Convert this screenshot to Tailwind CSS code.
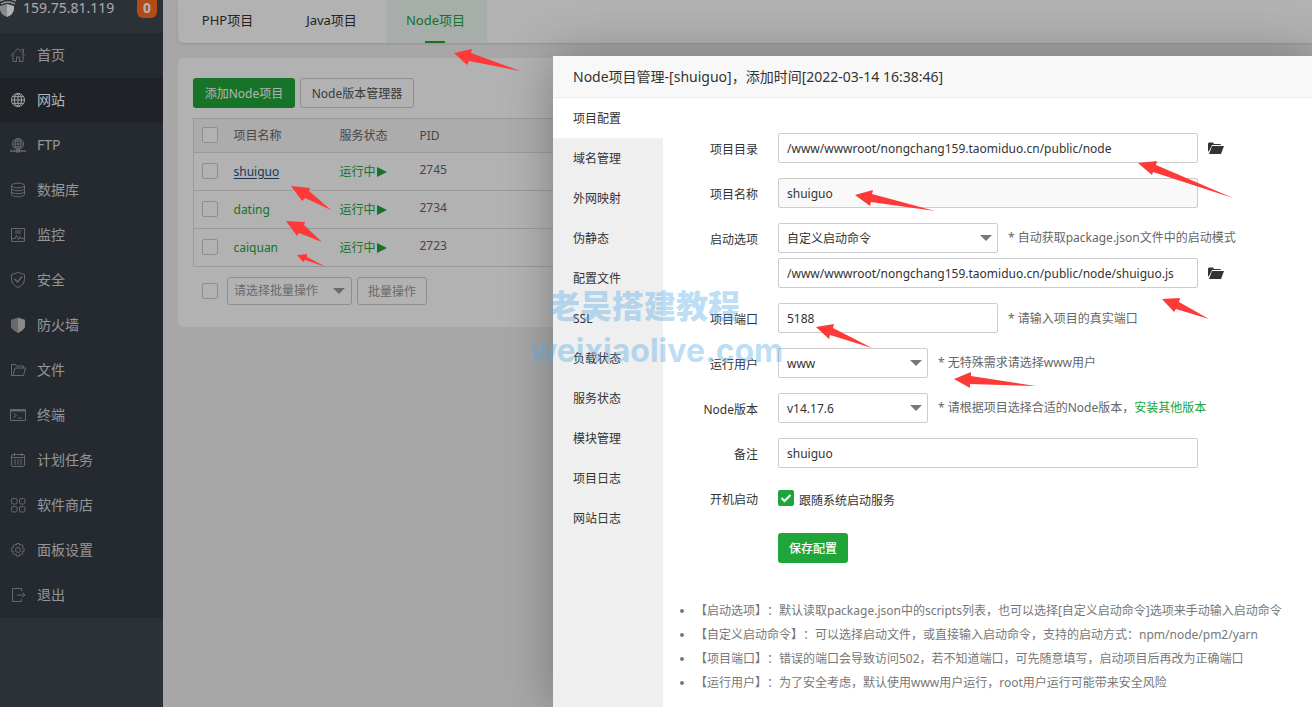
<!DOCTYPE html>
<html lang="zh-CN">
<head>
<meta charset="utf-8">
<meta name="viewport" content="width=device-width, initial-scale=1">
<title>Node项目管理</title>
<script src="https://cdn.jsdelivr.net/npm/@tailwindcss/browser@4"></script>
</head>
<body class="relative flex h-screen overflow-hidden bg-[#f0f0f0] font-['Noto_Sans','Noto_Sans_CJK_SC',sans-serif] text-xs text-[#666] [text-spacing-trim:space-all]">

<!-- Sidebar -->
<aside class="flex w-[163px] shrink-0 flex-col bg-[#404650]">
  <div class="flex h-[33px] shrink-0 items-start justify-between pr-[6px]">
    <div class="flex items-center">
      <svg class="h-[18px] w-4" viewBox="0 0 16 18"><path d="M0 1Q8-3 16 1M1 4Q8 0 15 4" fill="none" stroke="#d8d8d8" stroke-width="1.3"/><path d="M0 6l7-2v13Q0 14 0 9z" fill="#c5c5c5"/><path d="M14 6L7 4v13q7-3 7-8z" fill="#fff"/></svg>
      <span class="ml-[7px] pb-[2px] text-sm leading-4 text-[#f0f0f0]">159.75.81.119</span>
    </div>
    <span class="flex h-[18px] w-5 items-center justify-center rounded-b-md bg-[#ff6c22] pb-[2px] text-sm font-bold text-white">0</span>
  </div>
  <nav class="flex flex-col bg-[#363d46] text-sm text-[#d4d6d9] [&_a]:flex [&_a]:h-[45px] [&_a]:items-center [&_a]:gap-[11px] [&_a]:pb-[2px] [&_a]:pl-[10px] [&_svg]:size-4 [&_svg]:fill-none [&_svg]:stroke-[#92969b]">
    <a href="#"><svg viewBox="0 0 16 16"><path d="M1 8.500L8 1.500l7 7M3 7v7.500h3.500V10h3v4.500H13V7M11.500 2.500h2V6"/></svg>首页</a>
    <a href="#" class="bg-[#2d3137] text-white"><svg class="!stroke-[#eee]" viewBox="0 0 16 16"><circle cx="8" cy="8" r="6.500"/><ellipse cx="8" cy="8" rx="3.500" ry="6.500"/><path d="M8 1.500v13M1.500 8h13M2.500 4.700h11M2.500 11.300h11"/></svg>网站</a>
    <a href="#"><svg viewBox="0 0 16 16"><circle cx="8" cy="7" r="5.500"/><ellipse cx="8" cy="7" rx="2.800" ry="5.500"/><path d="M8 1.500v11M2.500 7h11M3.500 4.200h9M3.500 9.800h9"/><path d="M0 14h16" stroke-width="1.500"/><path d="M6 14h4" stroke-width="3"/></svg>FTP</a>
    <a href="#"><svg viewBox="0 0 16 16"><ellipse cx="8" cy="3.500" rx="6.500" ry="2.300"/><path d="M1.500 3.500v9c0 3 13 3 13 0v-9M1.500 6.500c0 3 13 3 13 0M1.500 9.500c0 3 13 3 13 0"/></svg>数据库</a>
    <a href="#"><svg viewBox="0 0 16 16"><path d="M1.500 1.500h13v13h-13zM5 4h6M5 6h6M2 11.500h3l1.500-3 2 4 1.500-3 1 2h3"/></svg>监控</a>
    <a href="#"><svg viewBox="0 0 16 16"><path d="M8 .500l6.500 2v5Q14 13 8 15.500 2 13 1.500 7.500v-5z"/><path d="M4.500 7l3 3L12 4.500" stroke-width="1.300"/></svg>安全</a>
    <a href="#"><svg class="!stroke-none" viewBox="0 0 16 16"><path d="M8 0L6.500 1.500 5 1 4 2.500 2.500 2 1 3v7q1 3 7 6z" fill="#999"/><path d="M8 0l1.500 1.500L11 1l1 1.500 1.500-.5L15 3v7q-1 3-7 6z" fill="#c4c4c4"/></svg>防火墙</a>
    <a href="#"><svg viewBox="0 0 16 16"><path d="M3 13.500H1.500v-11h4l1 1.500h7v2M3 13.500L5 6h10.500l-2 7.500z"/></svg>文件</a>
    <a href="#"><svg viewBox="0 0 16 16"><path d="M.500 2.500h15v11H.500z"/><path d="M0 3.500h16" stroke-width="2"/><path d="M3.500 6.500l3 2-3 2M8 11h4"/></svg>终端</a>
    <a href="#"><svg viewBox="0 0 16 16"><rect x="1.500" y="2.500" width="13" height="12" rx="1.500"/><path d="M1.500 5.500h13M4.500 1v3M11.500 1v3"/><path d="M4 8h8M4 10h8M4 12h8" stroke-dasharray="2 1"/></svg>计划任务</a>
    <a href="#"><svg viewBox="0 0 16 16"><rect x="1.500" y="1.500" width="5.500" height="5.500" rx="1.500"/><rect x="9.500" y="1.500" width="5.500" height="5.500" rx="1.500"/><rect x="1.500" y="9.500" width="5.500" height="5.500" rx="1.500"/><rect x="9.500" y="9.500" width="5.500" height="5.500" rx="1.500"/></svg>软件商店</a>
    <a href="#"><svg viewBox="0 0 16 16"><circle cx="8" cy="8" r="2.500"/><path d="M6.800 1.500h2.400l.5 1.700 1.700-.8 1.600 1.600-.8 1.700 1.900.6v2.900l-1.900.5.8 1.700-1.600 1.600-1.700-.8-.5 1.900H6.800l-.6-1.900-1.700.8L2.900 11.400l.8-1.700-2-.5V6.300l2-.6L2.900 4l1.600-1.600 1.700.8z"/></svg>面板设置</a>
    <a href="#"><svg viewBox="0 0 16 16"><path d="M11.500 4V1.500h-9v13h9V12M7 8h7.500M12.500 5.500L15 8l-2.500 2.500"/></svg>退出</a>
  </nav>
</aside>

<!-- Project list -->
<main class="min-w-0 flex-1 pl-[15px]">
  <nav class="flex h-[43px] gap-[3px] rounded-bl-md bg-white text-[13px] text-[#333] shadow-sm [&_a]:flex [&_a]:w-[101px] [&_a]:items-center [&_a]:justify-center [&_a]:pr-[2px] [&_a]:pb-px">
    <a href="#">PHP项目</a>
    <a href="#">Java项目</a>
    <a href="#" class="relative bg-[#eff9f3] text-[#20a53a]">Node项目<span class="absolute bottom-0 left-[39px] h-[2px] w-5 bg-[#20a53a]"></span></a>
  </nav>
  <section class="mt-[15px] rounded-l-md bg-white px-[15px] pt-5 pb-[22px]">
    <div class="flex gap-[5px]">
      <button class="h-[30px] w-[102px] rounded-[3px] bg-[#20a53a] pt-[2px] whitespace-nowrap text-white">添加Node项目</button>
      <button class="h-[30px] w-[114px] rounded-[3px] border border-[#ccc] pt-[2px] whitespace-nowrap text-[#555]">Node版本管理器</button>
    </div>
    <table class="mt-[10px] w-full table-fixed border-collapse border border-[#ddd] text-left">
      <thead>
        <tr class="h-[34px] border-b border-[#ddd] bg-[#f6f6f6]">
          <th class="w-10 pb-[2px] pl-2"><input type="checkbox" aria-label="全选" class="block size-4 appearance-none rounded-xs border border-[#ccc] bg-white"></th>
          <th class="w-[106px] font-normal">项目名称</th>
          <th class="w-20 font-normal">服务状态</th>
          <th class="font-normal">PID</th>
        </tr>
      </thead>
      <tbody class="[&_svg]:ml-px [&_svg]:inline [&_svg]:h-3 [&_svg]:w-[10px] [&_svg]:fill-[#20a53a]">
        <tr class="h-[38px] border-b border-[#ddd]">
          <td class="pb-[2px] pl-2"><input type="checkbox" aria-label="shuiguo" class="block size-4 appearance-none rounded-xs border border-[#ccc] bg-white"></td>
          <td><a href="#" class="text-[#23527c] underline underline-offset-2">shuiguo</a></td>
          <td class="text-[#20a53a]">运行中<svg viewBox="0 0 10 12"><path d="M0 1l10 5-10 5z"/></svg></td>
          <td class="pb-1">2745</td>
        </tr>
        <tr class="h-[38px] border-b border-[#ddd]">
          <td class="pb-[2px] pl-2"><input type="checkbox" aria-label="dating" class="block size-4 appearance-none rounded-xs border border-[#ccc] bg-white"></td>
          <td><a href="#" class="text-[#20a53a]">dating</a></td>
          <td class="text-[#20a53a]">运行中<svg viewBox="0 0 10 12"><path d="M0 1l10 5-10 5z"/></svg></td>
          <td class="pb-1">2734</td>
        </tr>
        <tr class="h-[38px]">
          <td class="pb-[2px] pl-2"><input type="checkbox" aria-label="caiquan" class="block size-4 appearance-none rounded-xs border border-[#ccc] bg-white"></td>
          <td><a href="#" class="text-[#20a53a]">caiquan</a></td>
          <td class="text-[#20a53a]">运行中<svg viewBox="0 0 10 12"><path d="M0 1l10 5-10 5z"/></svg></td>
          <td class="pb-1">2723</td>
        </tr>
      </tbody>
    </table>
    <div class="mt-[10px] flex items-center pl-[9px] text-[#999]">
      <input type="checkbox" aria-label="选择全部" class="size-4 appearance-none rounded-xs border border-[#ccc] bg-white">
      <div class="relative ml-[9px]">
        <select aria-label="批量操作" class="h-7 w-[125px] appearance-none rounded-[3px] border border-[#ccc] pl-[6px]"><option>请选择批量操作</option></select>
        <svg class="pointer-events-none absolute top-[11px] right-[7px] h-[6px] w-3 fill-[#999]" viewBox="0 0 12 6"><path d="M0 0h12L6 6z"/></svg>
      </div>
      <button class="ml-[5px] h-7 w-[70px] rounded-[3px] border border-[#ccc] pt-[2px]">批量操作</button>
    </div>
  </section>
</main>

<div class="absolute inset-0 bg-black/30"></div>

<!-- Project dialog -->
<div role="dialog" aria-label="Node项目管理" class="absolute top-14 right-0 bottom-0 left-[553px] flex flex-col rounded-tl-xs bg-white text-[#333] shadow-[1px_1px_50px_rgba(0,0,0,0.3)]">
  <h1 class="h-[42px] shrink-0 border-b border-[#eee] bg-[#f8f8f8] pl-5 text-sm leading-[41px]">Node项目管理-[shuiguo]，添加时间[2022-03-14 16:38:46]</h1>
  <div class="flex min-h-0 flex-1">
    <nav class="flex w-[110px] shrink-0 flex-col bg-[#efefef] [&_a]:h-10 [&_a]:pl-5 [&_a]:leading-[42px]">
      <a href="#" class="bg-white">项目配置</a>
      <a href="#">域名管理</a>
      <a href="#">外网映射</a>
      <a href="#">伪静态</a>
      <a href="#">配置文件</a>
      <a href="#">SSL</a>
      <a href="#">负载状态</a>
      <a href="#">服务状态</a>
      <a href="#">模块管理</a>
      <a href="#">项目日志</a>
      <a href="#">网站日志</a>
    </nav>
    <div class="min-w-0 flex-1 pt-[35px]">
      <form class="flex flex-col gap-[15px]">
        <div class="flex h-[30px] items-center">
          <label for="dir" class="w-[95px] pt-[3px] text-right">项目目录</label>
          <input id="dir" type="text" value="/www/wwwroot/nongchang159.taomiduo.cn/public/node" class="ml-5 h-[30px] w-[420px] rounded-xs border border-[#ccc] px-2">
          <button type="button" aria-label="选择目录" class="ml-[10px]"><svg class="h-3 w-4 fill-[#333]" viewBox="0 0 16 12"><path d="M0 10V1.500L1 .500h4L6 2h6q1 0 1 1H4L1.500 8z"/><path d="M4 4h12l-3 8H1z"/></svg></button>
        </div>
        <div class="flex h-[30px] items-center">
          <label for="name" class="w-[95px] pt-[3px] text-right">项目名称</label>
          <input id="name" type="text" readonly value="shuiguo" class="ml-5 h-[30px] w-[420px] rounded-xs border border-[#ccc] bg-[#f9f9f9] px-2">
        </div>
        <div class="flex flex-col gap-[5px]">
          <div class="flex h-[30px] items-center">
            <label for="start" class="w-[95px] pt-[3px] text-right">启动选项</label>
            <div class="relative ml-5">
              <select id="start" class="h-[30px] w-[220px] appearance-none rounded-xs border border-[#ccc] bg-white px-2 pt-[2px]"><option>自定义启动命令</option></select>
              <svg class="pointer-events-none absolute top-3 right-[6px] h-[6px] w-3 fill-[#777]" viewBox="0 0 12 6"><path d="M0 0h12L6 6z"/></svg>
            </div>
            <span class="ml-[10px] text-[#666]">* 自动获取package.json文件中的启动模式</span>
          </div>
          <div class="flex h-[30px] items-center pl-[115px]">
            <input aria-label="启动文件" type="text" value="/www/wwwroot/nongchang159.taomiduo.cn/public/node/shuiguo.js" class="h-[30px] w-[420px] rounded-xs border border-[#ccc] px-2">
            <button type="button" aria-label="选择文件" class="ml-[10px]"><svg class="h-3 w-4 fill-[#333]" viewBox="0 0 16 12"><path d="M0 10V1.500L1 .500h4L6 2h6q1 0 1 1H4L1.500 8z"/><path d="M4 4h12l-3 8H1z"/></svg></button>
          </div>
        </div>
        <div class="flex h-[30px] items-center">
          <label for="port" class="w-[95px] pt-[3px] text-right">项目端口</label>
          <input id="port" type="text" value="5188" class="ml-5 h-[30px] w-[220px] rounded-xs border border-[#ccc] px-2">
          <span class="ml-[10px] pt-[2px] text-[#666]">* 请输入项目的真实端口</span>
        </div>
        <div class="flex h-[30px] items-center">
          <label for="user" class="w-[95px] pt-[3px] text-right">运行用户</label>
          <div class="relative ml-5">
            <select id="user" class="h-[30px] w-[150px] appearance-none rounded-xs border border-[#ccc] bg-white px-2 pt-[2px]"><option>www</option></select>
            <svg class="pointer-events-none absolute top-3 right-[6px] h-[6px] w-3 fill-[#777]" viewBox="0 0 12 6"><path d="M0 0h12L6 6z"/></svg>
          </div>
          <span class="ml-[10px] text-[#666]">* 无特殊需求请选择www用户</span>
        </div>
        <div class="flex h-[30px] items-center">
          <label for="ver" class="w-[95px] pt-[3px] text-right">Node版本</label>
          <div class="relative ml-5">
            <select id="ver" class="h-[30px] w-[150px] appearance-none rounded-xs border border-[#ccc] bg-white px-2 pt-[2px]"><option>v14.17.6</option></select>
            <svg class="pointer-events-none absolute top-3 right-[6px] h-[6px] w-3 fill-[#777]" viewBox="0 0 12 6"><path d="M0 0h12L6 6z"/></svg>
          </div>
          <span class="ml-[10px] text-[#666]">* 请根据项目选择合适的Node版本，<a href="#" class="text-[#20a53a]">安装其他版本</a></span>
        </div>
        <div class="flex h-[30px] items-center">
          <label for="note" class="w-[95px] pt-[3px] text-right">备注</label>
          <input id="note" type="text" value="shuiguo" class="ml-5 h-[30px] w-[420px] rounded-xs border border-[#ccc] px-2">
        </div>
        <div class="flex h-[30px] items-center">
          <span class="w-[95px] pt-[3px] text-right">开机启动</span>
          <span class="relative ml-5 size-4">
            <input id="boot" type="checkbox" checked class="block size-4 appearance-none rounded-xs bg-[#20a53a]">
            <svg class="pointer-events-none absolute inset-0 size-4 fill-none stroke-white stroke-2" viewBox="0 0 16 16"><path d="M3.500 8l3 3 6-6"/></svg>
          </span>
          <label for="boot" class="ml-[5px] pt-[5px]">跟随系统启动服务</label>
        </div>
        <div class="flex h-[30px] pl-[115px]">
          <button type="button" class="mt-[5px] h-[30px] w-[70px] shrink-0 rounded-[3px] bg-[#20a53a] pt-[2px] font-medium text-white">保存配置</button>
        </div>
      </form>
      <ul class="mt-[41px] list-disc pl-8 leading-6 whitespace-nowrap text-[#777]">
        <li>【启动选项】：默认读取package.json中的scripts列表，也可以选择[自定义启动命令]选项来手动输入启动命令</li>
        <li>【自定义启动命令】：可以选择启动文件，或直接输入启动命令，支持的启动方式：npm/node/pm2/yarn</li>
        <li>【项目端口】：错误的端口会导致访问502，若不知道端口，可先随意填写，启动项目后再改为正确端口</li>
        <li>【运行用户】：为了安全考虑，默认使用www用户运行，root用户运行可能带来安全风险</li>
      </ul>
    </div>
  </div>
</div>

<!-- Watermark -->
<div class="pointer-events-none absolute top-[282px] left-[530px] flex flex-col gap-[3px] text-[#54a9e6]/40">
  <span class="pl-[18px] font-['Noto_Sans_CJK_SC',sans-serif] text-[32px] leading-[44px] font-black">老吴搭建教程</span>
  <span class="font-['Inter',sans-serif] text-[32px] leading-[44px] font-bold">weixiaolive.com</span>
</div>

<!-- Red pointer arrows -->
<svg class="pointer-events-none absolute top-0 left-0 h-[707px] w-[1312px] fill-[#fd3a37]" viewBox="0 0 1312 707">
  <path d="M454 53l18-4-1 4 49 18-51-10-2 4z"/>
  <path d="M291 186l19 2-1 3 22 19-26-12-3 3z"/>
  <path d="M286 221l19 1-1 3 18 17-23-9-2 3z"/>
  <path d="M297 255l10-1v3l19 10-21-7-2 2z"/>
  <path d="M855 195l18-5-1 4 63 17-64-9-1 4z"/>
  <path d="M1138 163l19-2-1 4 77 33-80-26-1 3z"/>
  <path d="M1162 299l18-1-1 4 30 17-33-10-2 3z"/>
  <path d="M816 327l18-3-1 4 39 20-42-13-1 4z"/>
  <path d="M954 379l17-7v4l65 10-66-2v4z"/>
</svg>
</body>
</html>
